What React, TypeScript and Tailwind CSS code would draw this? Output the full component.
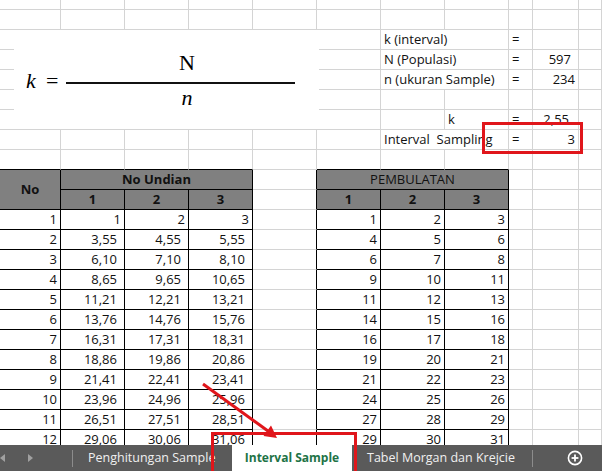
import React from "react";

type CellProps = {
  span?: 1 | 2 | 3;
  rows?: 1 | 2;
  r?: "g" | "k";
  b?: "g" | "k";
  className?: string;
  children?: React.ReactNode;
};

function Cell({ span = 1, rows = 1, r = "g", b = "g", className = "", children }: CellProps) {
  const spanCls = span === 3 ? "col-span-3" : span === 2 ? "col-span-2" : "";
  const rowCls = rows === 2 ? "row-span-2" : "";
  const rCls = r === "k" ? "border-r-black" : "border-r-[#d4d4d4]";
  const bCls = b === "k" ? "border-b-black" : "border-b-[#d4d4d4]";
  return (
    <div
      className={`border-r border-b ${rCls} ${bCls} ${spanCls} ${rowCls} overflow-hidden whitespace-nowrap ${className}`}
    >
      {children}
    </div>
  );
}

function Empty({ n }: { n: number }) {
  return (
    <>
      {Array.from({ length: n }).map((_, i) => (
        <Cell key={i} />
      ))}
    </>
  );
}

const t1: string[][] = [
  ["1", "1", "2", "3"],
  ["2", "3,55", "4,55", "5,55"],
  ["3", "6,10", "7,10", "8,10"],
  ["4", "8,65", "9,65", "10,65"],
  ["5", "11,21", "12,21", "13,21"],
  ["6", "13,76", "14,76", "15,76"],
  ["7", "16,31", "17,31", "18,31"],
  ["8", "18,86", "19,86", "20,86"],
  ["9", "21,41", "22,41", "23,41"],
  ["10", "23,96", "24,96", "25,96"],
  ["11", "26,51", "27,51", "28,51"],
  ["12", "29,06", "30,06", "31,06"],
];

const t2: string[][] = [
  ["1", "2", "3"],
  ["4", "5", "6"],
  ["6", "7", "8"],
  ["9", "10", "11"],
  ["11", "12", "13"],
  ["14", "15", "16"],
  ["16", "17", "18"],
  ["19", "20", "21"],
  ["21", "22", "23"],
  ["24", "25", "26"],
  ["27", "28", "29"],
  ["29", "30", "31"],
];

export default function App() {
  return (
    <div className="relative h-[471px] w-[602px] overflow-hidden bg-white font-['Open_Sans',sans-serif] text-black">
      <div className="h-[445px] overflow-hidden">
        <div className="grid grid-cols-[61px_64px_64px_64px_64px_64px_64px_64px_24px_46px_1fr] grid-rows-[10px_repeat(22,20px)] text-[13px] leading-[19px] text-[#111]">
          {/* row 0 & 1 */}
          <Empty n={11} />
          <Empty n={11} />
          {/* row 2 */}
          <Empty n={6} />
          <Cell span={2} className="pl-[3px]">k (interval)</Cell>
          <Cell className="pl-[3px]">=</Cell>
          <Empty n={2} />
          {/* row 3 */}
          <Empty n={6} />
          <Cell span={2} className="pl-[3px]">N (Populasi)</Cell>
          <Cell className="pl-[3px]">=</Cell>
          <Cell className="pr-[7px] text-right">597</Cell>
          <Empty n={1} />
          {/* row 4 */}
          <Empty n={6} />
          <Cell span={2} className="pl-[3px]">n (ukuran Sample)</Cell>
          <Cell className="pl-[3px]">=</Cell>
          <Cell className="pr-[3px] text-right">234</Cell>
          <Empty n={1} />
          {/* row 5 */}
          <Empty n={11} />
          {/* row 6 */}
          <Empty n={7} />
          <Cell className="pl-[3px]">k</Cell>
          <Cell className="pl-[3px]">=</Cell>
          <Cell className="pr-[9px] text-right">2,55</Cell>
          <Empty n={1} />
          {/* row 7 */}
          <Empty n={6} />
          <Cell span={2} className="pl-[3px] whitespace-pre">Interval  Sampling</Cell>
          <Cell className="pl-[3px]">=</Cell>
          <Cell className="pr-[3px] text-right">3</Cell>
          <Empty n={1} />
          {/* row 8 */}
          <Cell b="k" />
          <Cell b="k" />
          <Cell b="k" />
          <Cell b="k" />
          <Cell />
          <Cell b="k" />
          <Cell b="k" />
          <Cell b="k" />
          <Empty n={3} />
          {/* row 9 */}
          <Cell rows={2} r="k" b="k" className="flex items-center justify-center bg-[#808080] font-bold">
            No
          </Cell>
          <Cell span={3} r="k" b="k" className="bg-[#808080] text-center font-bold">
            No Undian
          </Cell>
          <Cell r="k" />
          <Cell span={3} r="k" b="k" className="bg-[#808080] text-center text-[#111]">
            PEMBULATAN
          </Cell>
          <Empty n={3} />
          {/* row 10 */}
          <Cell r="k" b="k" className="bg-[#808080] text-center font-bold">1</Cell>
          <Cell r="k" b="k" className="bg-[#808080] text-center font-bold">2</Cell>
          <Cell r="k" b="k" className="bg-[#808080] text-center font-bold">3</Cell>
          <Cell r="k" />
          <Cell r="k" b="k" className="bg-[#808080] text-center font-bold">1</Cell>
          <Cell r="k" b="k" className="bg-[#808080] text-center font-bold">2</Cell>
          <Cell r="k" b="k" className="bg-[#808080] text-center font-bold">3</Cell>
          <Empty n={3} />
          {/* data rows */}
          {t1.map((row, i) => (
            <React.Fragment key={i}>
              <Cell r="k" b="k" className="pr-[3px] text-right">{row[0]}</Cell>
              {row.slice(1).map((v, j) => (
                <Cell
                  key={j}
                  r="k"
                  b="k"
                  className={v.includes(",") ? "pr-[7px] text-right" : "pr-[3px] text-right"}
                >
                  {v}
                </Cell>
              ))}
              <Cell r="k" />
              {t2[i].map((v, j) => (
                <Cell key={j} r="k" b="k" className="pr-[3px] text-right">
                  {v}
                </Cell>
              ))}
              <Empty n={3} />
            </React.Fragment>
          ))}
        </div>
      </div>

      {/* sheet tabs */}
      <div className="flex h-[26px] items-stretch bg-[#5a5a5a] text-[12.5px] text-[#f0f0f0]">
        <div className="flex w-[72px] items-center">
          <svg width="6" height="8" viewBox="0 0 6 8" className="ml-[0px]">
            <polygon points="5,0 5,8 0,4" fill="#a0a0a0" />
          </svg>
          <svg width="6" height="8" viewBox="0 0 6 8" className="ml-[21px]">
            <polygon points="1,0 1,8 6,4" fill="#a0a0a0" />
          </svg>
        </div>
        <div className="h-[17px] w-px self-center bg-[#8c8c8c]" />
        <div className="flex w-[159px] items-center whitespace-nowrap pl-[15px]">Penghitungan Sample</div>
        <div className="flex w-[120px] items-center justify-center whitespace-nowrap bg-white text-[12px] font-bold text-[#217346]">
          Interval Sample
        </div>
        <div className="flex w-[180px] items-center whitespace-nowrap pl-[15px]">Tabel Morgan dan Krejcie</div>
        <div className="h-[17px] w-px self-center bg-[#8c8c8c]" />
        <div className="flex flex-1 items-center pl-[34px]">
          <svg width="16" height="16" viewBox="0 0 16 16">
            <circle cx="8" cy="8" r="6.6" fill="none" stroke="#ffffff" strokeWidth="1.6" />
            <line x1="4.6" y1="8" x2="11.4" y2="8" stroke="#ffffff" strokeWidth="1.8" />
            <line x1="8" y1="4.6" x2="8" y2="11.4" stroke="#ffffff" strokeWidth="1.8" />
          </svg>
        </div>
      </div>

      {/* formula object */}
      <div className="absolute left-[14px] top-[30px] flex h-[99px] w-[305px] items-start bg-white pl-[12px] font-['Liberation_Serif',serif] text-[22px] leading-[22px]">
        <span className="mt-[40px] inline-block w-[20px] italic">k</span>
        <span className="mt-[40px] inline-block w-[20px]">=</span>
        <div className="mt-[22px] flex w-[229px] flex-col items-center">
          <span className="pl-[13px]">N</span>
          <div className="mt-[8px] h-[2px] w-full bg-[#111]" />
          <span className="mt-[3px] pl-[13px] italic">n</span>
        </div>
      </div>

      {/* red annotations */}
      <div className="absolute left-[482px] top-[122px] h-[32px] w-[101px] border-[3px] border-[#e0161b]" />
      <div className="absolute left-[211px] top-[432px] h-[45px] w-[146px] border-[3px] border-[#e0161b]" />
      <svg className="pointer-events-none absolute left-0 top-0" width="602" height="471">
        <line x1="203" y1="384" x2="268" y2="431" stroke="#e0161b" strokeWidth="3" />
        <polygon points="277,438 263.5,436 271,425.5" fill="#e0161b" />
      </svg>
    </div>
  );
}
